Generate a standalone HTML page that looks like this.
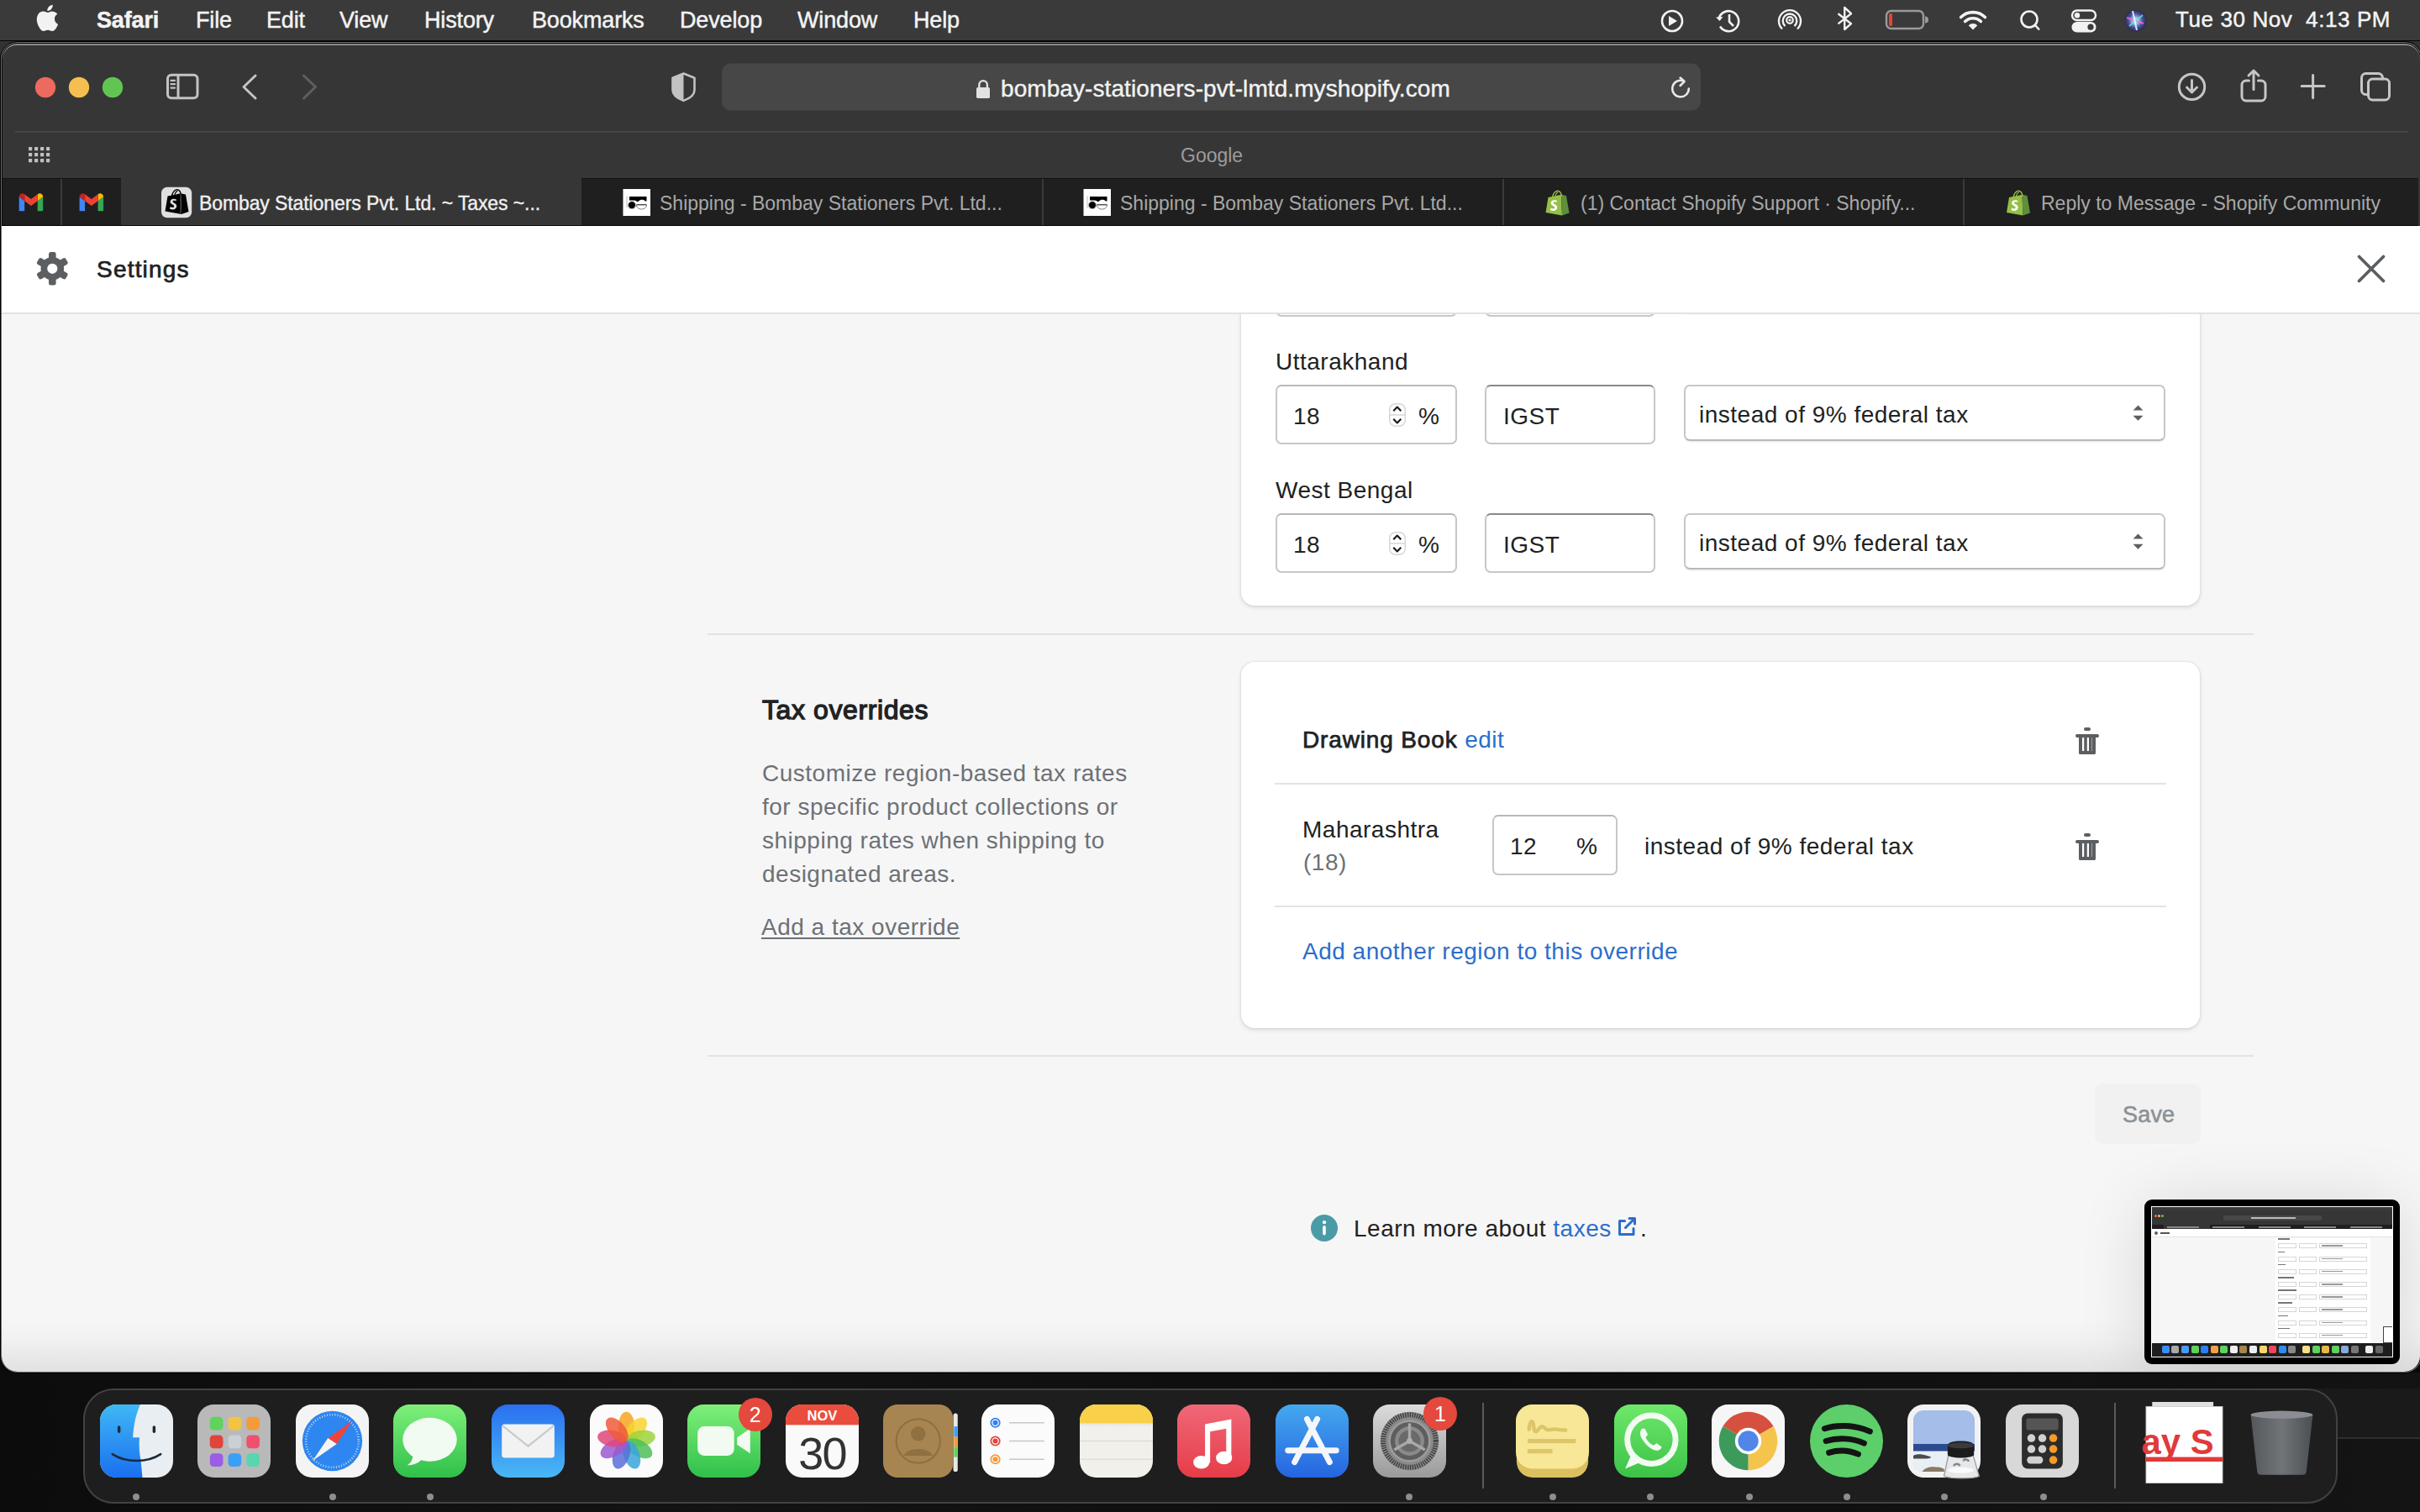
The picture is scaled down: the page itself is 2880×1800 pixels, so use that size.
<!DOCTYPE html><html><head><meta charset="utf-8"><style>
*{box-sizing:border-box;margin:0;padding:0}
html,body{width:2880px;height:1800px;overflow:hidden}
body{position:relative;background:#0b0b0b;font-family:"Liberation Sans",sans-serif;color:#202223}
.a{position:absolute}
.mi{position:absolute;top:6px;font-size:27px;line-height:36px;color:#f4f4f4;white-space:nowrap;-webkit-text-stroke:0.45px #f4f4f4;letter-spacing:-0.15px}
.tab{position:absolute;top:215px;height:55px;color:#a8a8a8;font-size:23px;line-height:55px;white-space:nowrap}
.t{position:absolute;white-space:nowrap;font-size:28px;letter-spacing:0.5px;line-height:36px;color:#202223}
.card{position:absolute;background:#fff;border-radius:16px;box-shadow:0 0 0 1px rgba(63,63,68,.06),0 2px 5px rgba(63,63,68,.16)}
.inp{position:absolute;background:#fff;border:2px solid #c4c7cb;border-top-color:#b5b9be;border-radius:7px}
.inp2{position:absolute;background:#fff;border:2px solid #c4c7cb;border-top-color:#858a8f;border-radius:7px}
.sel{position:absolute;background:#fff;border:2px solid #c4c7cb;border-bottom-color:#b5b9be;border-radius:7px;box-shadow:0 2px 1px rgba(0,0,0,.05)}
.hr{position:absolute;height:2px;background:#e1e3e5}
.ic{position:absolute;overflow:visible}
</style></head><body>
<div class="a" style="left:0;top:1634px;width:2880px;height:166px;background:linear-gradient(90deg,#0c0c0c,#131313 30%,#0d0d0d 60%,#141414)"></div>
<div class="a" style="left:0;top:0;width:2880px;height:49px;background:#3a3a3a;border-bottom:1px solid #050505"></div>
<div class="mi" style="left:115px;font-weight:700">Safari</div>
<div class="mi" style="left:233px;font-weight:400">File</div>
<div class="mi" style="left:317px;font-weight:400">Edit</div>
<div class="mi" style="left:404px;font-weight:400">View</div>
<div class="mi" style="left:505px;font-weight:400">History</div>
<div class="mi" style="left:633px;font-weight:400">Bookmarks</div>
<div class="mi" style="left:809px;font-weight:400">Develop</div>
<div class="mi" style="left:949px;font-weight:400">Window</div>
<div class="mi" style="left:1087px;font-weight:400">Help</div>
<div class="mi" style="left:2589px;top:5px;font-size:26px;letter-spacing:0.6px">Tue 30 Nov&nbsp; 4:13 PM</div>
<svg class="ic" style="left:0;top:0" width="2880" height="49" viewBox="0 0 2880 49">
<g fill="#f2f2f2">
 <!-- apple logo -->
 <path d="M62.5 14.5c1.6-2 2.7-4.6 2.4-7.3-2.3.1-5.1 1.6-6.7 3.5-1.5 1.7-2.8 4.4-2.4 7 2.6.2 5.2-1.3 6.7-3.2zM64.9 18.3c-3.7-.2-6.8 2.1-8.6 2.1-1.8 0-4.5-2-7.4-1.9-3.8.1-7.3 2.2-9.2 5.6-3.9 6.8-1 16.9 2.8 22.4 1.9 2.7 4.1 5.7 7 5.6 2.8-.1 3.9-1.8 7.3-1.8 3.4 0 4.4 1.8 7.4 1.8 3 -.1 4.9-2.8 6.8-5.5 2.1-3.1 3-6.1 3-6.3-.1 0-5.9-2.3-5.9-8.9-.1-5.6 4.5-8.2 4.7-8.4-2.6-3.8-6.6-4.2-8-4.3z" transform="translate(17.3 0.6) scale(0.70)"/>
</g>
<g fill="none" stroke="#f2f2f2" stroke-width="2.6">
 <circle cx="1990" cy="25" r="12"/>
 <path d="M2045.5 22.5a12 12 0 1 1 1.5 9" />
 <path d="M2058 17v9l5 5"/>
 <path d="M2121 34.5a13 13 0 1 1 18 0" stroke-width="2.4"/>
 <path d="M2124.5 31a8.3 8.3 0 1 1 11 0" stroke-width="2.4"/>
 <circle cx="2130" cy="24" r="3.8" stroke-width="2.2"/>
 <path d="M2187.5 16.2L2203 28.2 2195.2 35V9l7.8 7.2-15.5 12.2" stroke-width="2.4" stroke-linejoin="round"/>
 <rect x="2245" y="13" width="44" height="21" rx="5.5" stroke="#9a9a9a" stroke-width="2.4"/>
 <circle cx="2415" cy="23" r="9.5"/>
 <path d="M2422 30l5 5.5"/>
</g>
<path d="M2042 20.5l4.5 4.5 4-5z" fill="#f2f2f2"/>
<path d="M1986 19v12l10-6z" fill="#f2f2f2"/>
<circle cx="2130" cy="24" r="1.6" fill="#f2f2f2"/>
<path d="M2291 19.5a3.5 3.5 0 0 1 0 8z" fill="#9a9a9a"/>
<rect x="2248" y="16" width="4" height="15" rx="1.5" fill="#ea4335"/>
<g fill="none" stroke="#f2f2f2" stroke-width="3.6" stroke-linecap="round">
 <path d="M2333.6 20.6a20.4 20.4 0 0 1 28.8 0"/>
 <path d="M2338.6 25.6a13.3 13.3 0 0 1 18.8 0"/>
</g>
<path d="M2348 35.5l-5.3-5.3a7.5 7.5 0 0 1 10.6 0z" fill="#f2f2f2"/>
<g>
 <rect x="2466" y="12.5" width="28" height="11.5" rx="5.75" fill="none" stroke="#f2f2f2" stroke-width="2.4"/>
 <circle cx="2472" cy="18.3" r="3.2" fill="#f2f2f2"/>
 <rect x="2465.5" y="26" width="29" height="12.5" rx="6.25" fill="#f2f2f2"/>
 <circle cx="2488" cy="32.2" r="3.6" fill="#3a3a3a"/>
</g>
<defs>
 <radialGradient id="siri" cx="50%" cy="50%" r="50%">
  <stop offset="0" stop-color="#f0f8ff"/><stop offset="0.3" stop-color="#8fb8e8"/><stop offset="0.65" stop-color="#4a4f9a"/><stop offset="1" stop-color="#2c2a48"/>
 </radialGradient>
</defs>
<circle cx="2541.5" cy="24.5" r="13" fill="url(#siri)"/>
<path d="M2531 21l20 7" stroke="#ff6ad5" stroke-width="2.2" opacity="0.8"/><path d="M2550 18l-16 13" stroke="#5ef0c0" stroke-width="2" opacity="0.8"/><path d="M2538 13l5 23" stroke="#e8f8ff" stroke-width="2" opacity="0.9"/>
</svg>
<div class="a" style="left:0;top:49px;width:2880px;height:60px;background:#323232"></div>
<div class="a" style="left:0;top:49px;width:2883px;height:1586px;border-radius:21px;background:#000"></div>
<div class="a" style="left:1px;top:50px;width:2881px;height:1584px;border-radius:20px;background:#6e6e6e"></div>
<div class="a" style="left:2px;top:51px;width:2879px;height:1582px;border-radius:19px;background:#0a0a0a"></div>
<div class="a" style="left:3px;top:52px;width:2877px;height:1580px;border-radius:18px;background:#8a8a8a"></div>
<div class="a" style="left:3px;top:54px;width:2877px;height:1578px;border-radius:17px;background:#363636"></div>
<svg class="ic" style="left:0;top:49px" width="2880" height="165" viewBox="0 49 2880 165">
<circle cx="54" cy="104" r="12.2" fill="#ed6a5e"/>
<circle cx="94" cy="104" r="12.2" fill="#f5bf4f"/>
<circle cx="134" cy="104" r="12.2" fill="#61c554"/>
<g fill="none" stroke="#c4c4c4" stroke-width="3" stroke-linecap="round" stroke-linejoin="round">
 <rect x="199.5" y="89.2" width="35.5" height="27.5" rx="4.5"/>
 <path d="M212 89.5v27"/>
 <path d="M203.5 95.8h4.5M203.5 100.2h4.5M203.5 104.6h4.5" stroke-width="2.3"/>
 <path d="M304 90l-14 13.5 14 13.5"/>
 <path d="M361.5 90l14 13.5-14 13.5" stroke="#5f5f5f"/>
</g>
<path d="M813.5 87.5l-13 5.2v14.5c0 5 4.5 9.5 13 12.7 8.5-3.2 13-7.7 13-12.7v-14.5z" fill="none" stroke="#c2c2c2" stroke-width="2.6" stroke-linejoin="round"/>
<path d="M813.5 87.5l-13 5.2v14.5c0 5 4.5 9.5 13 12.7z" fill="#c2c2c2"/>
<rect x="859" y="75.5" width="1165" height="56" rx="11" fill="#474747"/>
<path d="M1165.3 104.5v-3.6a4.8 4.8 0 0 1 9.6 0v3.6" fill="none" stroke="#e2e2e2" stroke-width="2.4"/>
<rect x="1162" y="104" width="16" height="13" rx="1.8" fill="#e2e2e2"/>
<g fill="none" stroke="#e8e8e8" stroke-width="2.5" stroke-linecap="round" stroke-linejoin="round">
 <path d="M2009.8 105.5a9.8 9.8 0 1 1-6.5-9.2"/>
 <path d="M1999.6 92.5l5 4.5-5 5"/>
</g>
<rect x="18" y="156" width="2848" height="1.6" fill="#4a4a4a"/>
<g fill="#c0c0c0">
<rect x="34" y="175" width="4.2" height="4.2" rx="0.6"/><rect x="41" y="175" width="4.2" height="4.2" rx="0.6"/><rect x="48" y="175" width="4.2" height="4.2" rx="0.6"/><rect x="55" y="175" width="4.2" height="4.2" rx="0.6"/><rect x="34" y="182" width="4.2" height="4.2" rx="0.6"/><rect x="41" y="182" width="4.2" height="4.2" rx="0.6"/><rect x="48" y="182" width="4.2" height="4.2" rx="0.6"/><rect x="55" y="182" width="4.2" height="4.2" rx="0.6"/><rect x="34" y="189" width="4.2" height="4.2" rx="0.6"/><rect x="41" y="189" width="4.2" height="4.2" rx="0.6"/><rect x="48" y="189" width="4.2" height="4.2" rx="0.6"/><rect x="55" y="189" width="4.2" height="4.2" rx="0.6"/>
</g>
<g fill="none" stroke="#c6c6c6" stroke-width="3" stroke-linecap="round" stroke-linejoin="round">
 <circle cx="2608.5" cy="103.4" r="15.2"/>
 <path d="M2608.5 95.5v14M2602.5 104l6 6 6-6"/>
 <path d="M2676.5 96h-3.5a5 5 0 0 0-5 5v14a5 5 0 0 0 5 5h18a5 5 0 0 0 5-5v-14a5 5 0 0 0-5-5h-3.5"/>
 <path d="M2682 106.5v-22M2676 90l6-6 6 6"/>
 <path d="M2752.6 89.5v27M2739.2 102.6h27"/>
 <path d="M2818 112.5h-2.5a5 5 0 0 1-5-5v-15a5 5 0 0 1 5-5h15a5 5 0 0 1 5 5v1.5"/>
 <rect x="2818.5" y="94" width="25" height="25" rx="5"/>
</g>
</svg>
<div class="a" style="left:1191px;top:88px;font-size:28px;line-height:36px;color:#f2f2f2;white-space:nowrap;letter-spacing:0.08px;-webkit-text-stroke:0.4px #f2f2f2">bombay-stationers-pvt-lmtd.myshopify.com</div>
<div class="a" style="left:1405px;top:170px;font-size:23px;line-height:30px;color:#9c9c9c;white-space:nowrap">Google</div>
<div class="a" style="left:3px;top:212px;width:2875px;height:57px;background:#1f1f1f;border-top:1px solid #121212;border-bottom:1px solid #050505"></div>
<div class="a" style="left:144px;top:212px;width:548px;height:56px;background:#363636"></div>
<div class="a" style="left:72px;top:213px;width:2px;height:55px;background:#3a3a3a"></div>
<div class="a" style="left:1240px;top:213px;width:2px;height:55px;background:#3a3a3a"></div>
<div class="a" style="left:1788px;top:213px;width:2px;height:55px;background:#3a3a3a"></div>
<div class="a" style="left:2336px;top:213px;width:2px;height:55px;background:#3a3a3a"></div>
<div class="tab" style="left:237px;color:#f0f0f0;-webkit-text-stroke:0.35px #f0f0f0;letter-spacing:-0.1px">Bombay Stationers Pvt. Ltd. ~ Taxes ~...</div>
<div class="tab" style="left:785px">Shipping - Bombay Stationers Pvt. Ltd...</div>
<div class="tab" style="left:1333px">Shipping - Bombay Stationers Pvt. Ltd...</div>
<div class="tab" style="left:1881px">(1) Contact Shopify Support · Shopify...</div>
<div class="tab" style="left:2429px">Reply to Message - Shopify Community</div>
<svg class="ic" style="left:0;top:212px" width="2880" height="57" viewBox="0 212 2880 57">
<g transform="translate(22.7 229.8)">
 <path d="M0 4.5v17h6.5V9.5z" fill="#4285f4"/>
 <path d="M22 9.5v12h6.5v-17z" fill="#34a853"/>
 <path d="M22 1.5v8l6.5-5c0-3.5-4-5.5-6.5-3z" fill="#fbbc04"/>
 <path d="M6.5 9.5v-8l7.75 5.8 7.75-5.8v8l-7.75 5.8z" fill="#ea4335"/>
 <path d="M0 4.5v0c0-3.5 4-5.5 6.5-3v8z" fill="#c5221f"/>
</g>
<g transform="translate(94.6 229.8)">
 <path d="M0 4.5v17h6.5V9.5z" fill="#4285f4"/>
 <path d="M22 9.5v12h6.5v-17z" fill="#34a853"/>
 <path d="M22 1.5v8l6.5-5c0-3.5-4-5.5-6.5-3z" fill="#fbbc04"/>
 <path d="M6.5 9.5v-8l7.75 5.8 7.75-5.8v8l-7.75 5.8z" fill="#ea4335"/>
 <path d="M0 4.5v0c0-3.5 4-5.5 6.5-3v8z" fill="#c5221f"/>
</g>
<rect x="192" y="222.7" width="36.2" height="36.5" rx="7" fill="#e0e0e0"/>
<g transform="translate(195.5 224) scale(1.0)">
 <path d="M4 9.5l15.5-3.3 1 24.8L1 27.5z" fill="#000"/>
 <path d="M19.5 6.2l6 1.3 3.5 20.5-8.5 3z" fill="#000"/>
 <path d="M9 9.8c0.5-4.5 3.2-8 6-8s4.5 2.5 5 6.5" fill="none" stroke="#000" stroke-width="1.4"/>
 <path d="M12.2 9c0.6-3 2-5.3 3.7-5.3" fill="none" stroke="#000" stroke-width="1.2"/>
 <path d="M14.5 13.5c-1-.6-2-.8-3.2-.8-2.6 0-4.2 1.6-4.2 3.5 0 3 4.6 3.3 4.6 5.2 0 .8-.6 1.5-1.7 1.5-1.4 0-2.8-.9-2.8-.9l-.7 2.6s1.3 1 3.4 1c2.8 0 4.8-2 4.8-4.3 0-3.3-4.7-3.7-4.7-5.3 0-.5.4-1.2 1.6-1.2 1.3 0 2.3.7 2.3.7z" fill="#e0e0e0"/>
 <path d="M19.5 6.5v24.3" stroke="#9a9a9a" stroke-width="0.5"/>
</g>
<g transform="translate(741.5 225)">
 <rect x="0" y="0" width="32.5" height="32" fill="#fff"/>
 <path d="M7.5 9h20.5v5.5h-1.5c-1.5-1.5-4-2.2-6.2-1.2-1.5.7-2.5 1.7-3 2.3-1-1.3-2.5-2-4.5-2h-5.3z" fill="#000"/>
 <path d="M4.5 8.5v14" stroke="#c8c8c8" stroke-width="1.2"/>
 <circle cx="10.5" cy="19.2" r="4.5" fill="#000" stroke="#bdbdbd" stroke-width="1"/>
 <path d="M16 19h12c0 3-2.6 5-6 5s-6-2-6-5z" fill="#fff" stroke="#777" stroke-width="1"/>
 <path d="M16 18.5h12" stroke="#555" stroke-width="1.2"/>
</g>
<g transform="translate(1289.5 225)">
 <rect x="0" y="0" width="32.5" height="32" fill="#fff"/>
 <path d="M7.5 9h20.5v5.5h-1.5c-1.5-1.5-4-2.2-6.2-1.2-1.5.7-2.5 1.7-3 2.3-1-1.3-2.5-2-4.5-2h-5.3z" fill="#000"/>
 <path d="M4.5 8.5v14" stroke="#c8c8c8" stroke-width="1.2"/>
 <circle cx="10.5" cy="19.2" r="4.5" fill="#000" stroke="#bdbdbd" stroke-width="1"/>
 <path d="M16 19h12c0 3-2.6 5-6 5s-6-2-6-5z" fill="#fff" stroke="#777" stroke-width="1"/>
 <path d="M16 18.5h12" stroke="#555" stroke-width="1.2"/>
</g>
<g transform="translate(1838.5 225.5) scale(1.0)">
 <path d="M4 9.5l15.5-3.3 1 24.8L1 27.5z" fill="#95bf47"/>
 <path d="M19.5 6.2l6 1.3 3.5 20.5-8.5 3z" fill="#5e8e3e"/>
 <path d="M9 9.8c0.5-4.5 3.2-8 6-8s4.5 2.5 5 6.5" fill="none" stroke="#95bf47" stroke-width="1.4"/>
 <path d="M12.2 9c0.6-3 2-5.3 3.7-5.3" fill="none" stroke="#95bf47" stroke-width="1.2"/>
 <path d="M14.5 13.5c-1-.6-2-.8-3.2-.8-2.6 0-4.2 1.6-4.2 3.5 0 3 4.6 3.3 4.6 5.2 0 .8-.6 1.5-1.7 1.5-1.4 0-2.8-.9-2.8-.9l-.7 2.6s1.3 1 3.4 1c2.8 0 4.8-2 4.8-4.3 0-3.3-4.7-3.7-4.7-5.3 0-.5.4-1.2 1.6-1.2 1.3 0 2.3.7 2.3.7z" fill="#ffffff"/>
 
</g>
<g transform="translate(2387 225.5) scale(1.0)">
 <path d="M4 9.5l15.5-3.3 1 24.8L1 27.5z" fill="#95bf47"/>
 <path d="M19.5 6.2l6 1.3 3.5 20.5-8.5 3z" fill="#5e8e3e"/>
 <path d="M9 9.8c0.5-4.5 3.2-8 6-8s4.5 2.5 5 6.5" fill="none" stroke="#95bf47" stroke-width="1.4"/>
 <path d="M12.2 9c0.6-3 2-5.3 3.7-5.3" fill="none" stroke="#95bf47" stroke-width="1.2"/>
 <path d="M14.5 13.5c-1-.6-2-.8-3.2-.8-2.6 0-4.2 1.6-4.2 3.5 0 3 4.6 3.3 4.6 5.2 0 .8-.6 1.5-1.7 1.5-1.4 0-2.8-.9-2.8-.9l-.7 2.6s1.3 1 3.4 1c2.8 0 4.8-2 4.8-4.3 0-3.3-4.7-3.7-4.7-5.3 0-.5.4-1.2 1.6-1.2 1.3 0 2.3.7 2.3.7z" fill="#ffffff"/>
 
</g>
</svg>
<div class="a" style="left:2px;top:269px;width:2878px;height:1364px;background:#f6f6f7;border-bottom-left-radius:19px;border-bottom-right-radius:19px;overflow:hidden"></div>
<div class="a" style="left:2px;top:1568px;width:2878px;height:66px;background:linear-gradient(rgba(0,0,0,0),rgba(0,0,0,.025) 45%,rgba(0,0,0,.085));border-bottom-left-radius:19px;border-bottom-right-radius:19px"></div>
<div class="card" style="left:1477px;top:300px;width:1141px;height:421px"></div>
<div class="inp" style="left:1518px;top:306px;width:216px;height:71px"></div>
<div class="inp2" style="left:1767px;top:306px;width:203px;height:71px"></div>
<div class="sel" style="left:2004px;top:306px;width:573px;height:67px"></div>
<div class="t" style="left:1518px;top:413px">Uttarakhand</div>
<div class="inp" style="left:1518px;top:458px;width:216px;height:71px"></div>
<div class="t" style="left:1539px;top:478px">18</div>
<svg class="ic" style="left:1653px;top:480px" width="20" height="28" viewBox="0 0 20 28">
<rect x="0.75" y="0.75" width="18.5" height="26.5" rx="7" fill="#fff" stroke="#d6d6d6" stroke-width="1.5"/>
<path d="M1 14h18" stroke="#d6d6d6" stroke-width="1.5"/>
<path d="M5.3 9.2l4.5-4.6 4.5 4.6M5.3 18.8l4.5 4.6 4.5-4.6" fill="none" stroke="#1a1a1a" stroke-width="2.2" stroke-linejoin="round"/>
</svg>
<div class="t" style="left:1688px;top:478px">%</div>
<div class="inp2" style="left:1767px;top:458px;width:203px;height:71px"></div>
<div class="t" style="left:1789px;top:478px">IGST</div>
<div class="sel" style="left:2004px;top:458px;width:573px;height:67px"></div>
<div class="t" style="left:2022px;top:476px">instead of 9% federal tax</div>
<svg class="ic" style="left:2537.5px;top:482px" width="14" height="20" viewBox="0 0 14 20">
<path d="M0.5 6.5L6.5 0.5 12.5 6.5z M0.5 12.8h12L6.5 18.8z" fill="#5c5f62"/>
</svg>
<div class="t" style="left:1518px;top:566px">West Bengal</div>
<div class="inp" style="left:1518px;top:611px;width:216px;height:71px"></div>
<div class="t" style="left:1539px;top:631px">18</div>
<svg class="ic" style="left:1653px;top:633px" width="20" height="28" viewBox="0 0 20 28">
<rect x="0.75" y="0.75" width="18.5" height="26.5" rx="7" fill="#fff" stroke="#d6d6d6" stroke-width="1.5"/>
<path d="M1 14h18" stroke="#d6d6d6" stroke-width="1.5"/>
<path d="M5.3 9.2l4.5-4.6 4.5 4.6M5.3 18.8l4.5 4.6 4.5-4.6" fill="none" stroke="#1a1a1a" stroke-width="2.2" stroke-linejoin="round"/>
</svg>
<div class="t" style="left:1688px;top:631px">%</div>
<div class="inp2" style="left:1767px;top:611px;width:203px;height:71px"></div>
<div class="t" style="left:1789px;top:631px">IGST</div>
<div class="sel" style="left:2004px;top:611px;width:573px;height:67px"></div>
<div class="t" style="left:2022px;top:629px">instead of 9% federal tax</div>
<svg class="ic" style="left:2537.5px;top:635px" width="14" height="20" viewBox="0 0 14 20">
<path d="M0.5 6.5L6.5 0.5 12.5 6.5z M0.5 12.8h12L6.5 18.8z" fill="#5c5f62"/>
</svg>
<div class="hr" style="left:842px;top:754px;width:1840px"></div>
<div class="t" style="left:907px;top:825px;font-size:32px;font-weight:400;letter-spacing:0.6px;line-height:40px;-webkit-text-stroke:1.3px #202223">Tax overrides</div>
<div class="t" style="left:907px;top:903px;color:#6d7175">Customize region-based tax rates</div>
<div class="t" style="left:907px;top:943px;color:#6d7175">for specific product collections or</div>
<div class="t" style="left:907px;top:983px;color:#6d7175">shipping rates when shipping to</div>
<div class="t" style="left:907px;top:1023px;color:#6d7175">designated areas.</div>
<div class="t" style="left:906px;top:1086px;color:#6d7175;text-decoration:underline;text-underline-offset:3px;text-decoration-thickness:2px">Add a tax override</div>
<div class="card" style="left:1477px;top:788px;width:1141px;height:436px"></div>
<div class="t" style="left:1550px;top:863px;font-weight:400;letter-spacing:0.85px;-webkit-text-stroke:0.75px #202223">Drawing Book <span style="-webkit-text-stroke:0"><span style="font-weight:400;color:#2c6ecb;letter-spacing:0.5px">edit</span></span></div>
<svg class="ic" style="left:2470px;top:866px" width="28" height="32" viewBox="0 0 28 32">
<g fill="#5c5f62">
<rect x="10" y="0" width="8" height="4" rx="2"/>
<rect x="0" y="8" width="28" height="4" rx="2"/>
<path d="M4 10h4v18h2.2V10h3.6v18h2.2V10h3.6v18H20V10h4v20.5a1.5 1.5 0 0 1-1.5 1.5h-17A1.5 1.5 0 0 1 4 30.5z"/>
</g></svg>
<div class="hr" style="left:1517px;top:932px;width:1061px"></div>
<div class="t" style="left:1550px;top:970px">Maharashtra</div>
<div class="t" style="left:1551px;top:1009px;color:#6d7175">(18)</div>
<div class="inp" style="left:1776px;top:970px;width:149px;height:72px"></div>
<div class="t" style="left:1797px;top:990px">12</div>
<div class="t" style="left:1876px;top:990px">%</div>
<div class="t" style="left:1957px;top:990px">instead of 9% federal tax</div>
<svg class="ic" style="left:2470px;top:992px" width="28" height="32" viewBox="0 0 28 32">
<g fill="#5c5f62">
<rect x="10" y="0" width="8" height="4" rx="2"/>
<rect x="0" y="8" width="28" height="4" rx="2"/>
<path d="M4 10h4v18h2.2V10h3.6v18h2.2V10h3.6v18H20V10h4v20.5a1.5 1.5 0 0 1-1.5 1.5h-17A1.5 1.5 0 0 1 4 30.5z"/>
</g></svg>
<div class="hr" style="left:1517px;top:1078px;width:1061px"></div>
<div class="t" style="left:1550px;top:1115px;color:#2c6ecb">Add another region to this override</div>
<div class="hr" style="left:842px;top:1256px;width:1840px"></div>
<div class="a" style="left:2494px;top:1291px;width:124px;height:70px;border-radius:8px;background:#f1f1f1;box-shadow:0 0 1px 1px rgba(0,0,0,.025)"></div>
<div class="t" style="left:2526px;top:1309px;color:#8c9196;font-size:27px;letter-spacing:0.2px;-webkit-text-stroke:0.6px #8c9196">Save</div>
<svg class="ic" style="left:1560px;top:1446px" width="32" height="32" viewBox="0 0 32 32">
<circle cx="16" cy="16" r="16" fill="#4b9ba7"/>
<circle cx="16" cy="9.2" r="2.1" fill="#fff"/>
<rect x="14.2" y="13" width="3.6" height="11.5" rx="1.8" fill="#fff"/>
</svg>
<div class="t" style="left:1611px;top:1445px">Learn more about <span style="color:#2c6ecb">taxes</span></div>
<svg class="ic" style="left:1922px;top:1446px" width="28" height="28" viewBox="0 0 28 28">
<g fill="none" stroke="#2c6ecb" stroke-width="3" stroke-linecap="round" stroke-linejoin="round">
<path d="M11.5 7.5H5.5v16h16.5v-7"/>
<path d="M12.5 15.5L23.5 4.5M17 4.5h6.5v6.5"/>
</g></svg>
<div class="t" style="left:1952px;top:1445px">.</div>
<div class="a" style="left:2px;top:269px;width:2878px;height:105px;background:#fff;border-bottom:2px solid #e1e3e5"></div>
<svg class="ic" style="left:42px;top:300px" width="40" height="40" viewBox="0 0 40 40">
<g fill="#5c5f62" transform="translate(20.3 19.8)">
<circle r="13.8"/>
<rect x="-4.3" y="-19.7" width="8.6" height="39.4" rx="2.5"/>
<rect x="-4.3" y="-19.7" width="8.6" height="39.4" rx="2.5" transform="rotate(60)"/>
<rect x="-4.3" y="-19.7" width="8.6" height="39.4" rx="2.5" transform="rotate(120)"/>
</g>
<circle cx="20.3" cy="19.8" r="6.1" fill="#fff"/>
</svg>
<div class="t" style="left:115px;top:303px;font-weight:400;letter-spacing:1.2px;-webkit-text-stroke:0.75px #202223">Settings</div>
<svg class="ic" style="left:2800px;top:298px" width="44" height="44" viewBox="0 0 44 44">
<path d="M7.5 7.5l29 29M36.5 7.5l-29 29" stroke="#5c5f62" stroke-width="3.8" stroke-linecap="round"/>
</svg>
<div class="a" style="left:2552px;top:1428px;width:304px;height:196px;border-radius:9px;background:#000;box-shadow:0 6px 80px rgba(0,0,0,.13)"></div>
<div class="a" style="left:2560px;top:1436px;width:288px;height:180px;background:#fff"></div>
<div class="a" style="left:2561px;top:1437px;width:286px;height:178px;background:#f6f6f7;overflow:hidden"><div class="a" style="left:0;top:0;width:286px;height:4px;background:#3a3a3a"></div><div class="a" style="left:0;top:4px;width:286px;height:17px;background:#363636"></div><div class="a" style="left:85px;top:10px;width:117px;height:6px;border-radius:1px;background:#474747"></div><div class="a" style="left:118px;top:12px;width:53px;height:2px;background:#bbb"></div><div class="a" style="left:3px;top:9px;width:3px;height:3px;border-radius:50%;background:#ed6a5e"></div><div class="a" style="left:7px;top:9px;width:3px;height:3px;border-radius:50%;background:#f5bf4f"></div><div class="a" style="left:11px;top:9px;width:3px;height:3px;border-radius:50%;background:#61c554"></div><div class="a" style="left:0;top:21px;width:286px;height:5px;background:#1f1f1f"></div><div class="a" style="left:14px;top:21px;width:55px;height:5px;background:#363636"></div><div class="a" style="left:18px;top:23px;width:38px;height:1.5px;background:#888"></div><div class="a" style="left:72px;top:23px;width:38px;height:1.5px;background:#888"></div><div class="a" style="left:127px;top:23px;width:38px;height:1.5px;background:#888"></div><div class="a" style="left:181px;top:23px;width:38px;height:1.5px;background:#888"></div><div class="a" style="left:236px;top:23px;width:38px;height:1.5px;background:#888"></div><div class="a" style="left:0;top:26px;width:286px;height:10px;background:#fff;border-bottom:1px solid #e3e3e3"></div><div class="a" style="left:3px;top:29px;width:4px;height:4px;border-radius:50%;background:#5c5f62"></div><div class="a" style="left:10px;top:30px;width:11px;height:2px;background:#555"></div><div class="a" style="left:147px;top:37px;width:113px;height:126px;background:#fff"></div><div class="a" style="left:150px;top:37.4px;width:14px;height:1.6px;background:#777"></div><div class="a" style="left:150px;top:43.4px;width:22px;height:6px;border:1px solid #d6d6d6;background:#fff"></div><div class="a" style="left:175px;top:43.4px;width:21px;height:6px;border:1px solid #d6d6d6;background:#fff"></div><div class="a" style="left:199px;top:43.4px;width:57px;height:6px;border:1px solid #d6d6d6;background:#fff"></div><div class="a" style="left:202px;top:45.4px;width:25px;height:1.5px;background:#999"></div><div class="a" style="left:150px;top:52.6px;width:8px;height:1.6px;background:#777"></div><div class="a" style="left:150px;top:58.6px;width:22px;height:6px;border:1px solid #d6d6d6;background:#fff"></div><div class="a" style="left:175px;top:58.6px;width:21px;height:6px;border:1px solid #d6d6d6;background:#fff"></div><div class="a" style="left:199px;top:58.6px;width:57px;height:6px;border:1px solid #d6d6d6;background:#fff"></div><div class="a" style="left:202px;top:60.6px;width:25px;height:1.5px;background:#999"></div><div class="a" style="left:150px;top:67.8px;width:9px;height:1.6px;background:#777"></div><div class="a" style="left:150px;top:73.8px;width:22px;height:6px;border:1px solid #d6d6d6;background:#fff"></div><div class="a" style="left:175px;top:73.8px;width:21px;height:6px;border:1px solid #d6d6d6;background:#fff"></div><div class="a" style="left:199px;top:73.8px;width:57px;height:6px;border:1px solid #d6d6d6;background:#fff"></div><div class="a" style="left:202px;top:75.8px;width:25px;height:1.5px;background:#999"></div><div class="a" style="left:150px;top:83.0px;width:19px;height:1.6px;background:#777"></div><div class="a" style="left:150px;top:89.0px;width:22px;height:6px;border:1px solid #d6d6d6;background:#fff"></div><div class="a" style="left:175px;top:89.0px;width:21px;height:6px;border:1px solid #d6d6d6;background:#fff"></div><div class="a" style="left:199px;top:89.0px;width:57px;height:6px;border:1px solid #d6d6d6;background:#fff"></div><div class="a" style="left:202px;top:91.0px;width:25px;height:1.5px;background:#999"></div><div class="a" style="left:150px;top:98.2px;width:22px;height:1.6px;background:#777"></div><div class="a" style="left:150px;top:104.2px;width:22px;height:6px;border:1px solid #d6d6d6;background:#fff"></div><div class="a" style="left:175px;top:104.2px;width:21px;height:6px;border:1px solid #d6d6d6;background:#fff"></div><div class="a" style="left:199px;top:104.2px;width:57px;height:6px;border:1px solid #d6d6d6;background:#fff"></div><div class="a" style="left:202px;top:106.2px;width:25px;height:1.5px;background:#999"></div><div class="a" style="left:150px;top:113.4px;width:17px;height:1.6px;background:#777"></div><div class="a" style="left:150px;top:119.4px;width:22px;height:6px;border:1px solid #d6d6d6;background:#fff"></div><div class="a" style="left:175px;top:119.4px;width:21px;height:6px;border:1px solid #d6d6d6;background:#fff"></div><div class="a" style="left:199px;top:119.4px;width:57px;height:6px;border:1px solid #d6d6d6;background:#fff"></div><div class="a" style="left:202px;top:121.4px;width:25px;height:1.5px;background:#999"></div><div class="a" style="left:150px;top:128.6px;width:12px;height:1.6px;background:#777"></div><div class="a" style="left:150px;top:134.6px;width:22px;height:6px;border:1px solid #d6d6d6;background:#fff"></div><div class="a" style="left:175px;top:134.6px;width:21px;height:6px;border:1px solid #d6d6d6;background:#fff"></div><div class="a" style="left:199px;top:134.6px;width:57px;height:6px;border:1px solid #d6d6d6;background:#fff"></div><div class="a" style="left:202px;top:136.6px;width:25px;height:1.5px;background:#999"></div><div class="a" style="left:150px;top:143.8px;width:14px;height:1.6px;background:#777"></div><div class="a" style="left:150px;top:149.8px;width:22px;height:6px;border:1px solid #d6d6d6;background:#fff"></div><div class="a" style="left:175px;top:149.8px;width:21px;height:6px;border:1px solid #d6d6d6;background:#fff"></div><div class="a" style="left:199px;top:149.8px;width:57px;height:6px;border:1px solid #d6d6d6;background:#fff"></div><div class="a" style="left:202px;top:151.8px;width:25px;height:1.5px;background:#999"></div><div class="a" style="left:275px;top:142px;width:11px;height:20px;background:#fff;border:1px solid #444;border-right:none"></div><div class="a" style="left:0;top:162px;width:286px;height:16px;background:#1e1e1e"></div><div class="a" style="left:11.8px;top:165px;width:9px;height:9px;border-radius:2px;background:#3d8bf5"></div><div class="a" style="left:23.4px;top:165px;width:9px;height:9px;border-radius:2px;background:#aaa"></div><div class="a" style="left:35.0px;top:165px;width:9px;height:9px;border-radius:2px;background:#4a9af5"></div><div class="a" style="left:46.5px;top:165px;width:9px;height:9px;border-radius:2px;background:#5ed25e"></div><div class="a" style="left:58.1px;top:165px;width:9px;height:9px;border-radius:2px;background:#2f7ff0"></div><div class="a" style="left:69.7px;top:165px;width:9px;height:9px;border-radius:2px;background:#f0a04a"></div><div class="a" style="left:81.3px;top:165px;width:9px;height:9px;border-radius:2px;background:#5ed25e"></div><div class="a" style="left:92.9px;top:165px;width:9px;height:9px;border-radius:2px;background:#eee"></div><div class="a" style="left:104.4px;top:165px;width:9px;height:9px;border-radius:2px;background:#a6854e"></div><div class="a" style="left:116.0px;top:165px;width:9px;height:9px;border-radius:2px;background:#eee"></div><div class="a" style="left:127.6px;top:165px;width:9px;height:9px;border-radius:2px;background:#f5d76e"></div><div class="a" style="left:139.2px;top:165px;width:9px;height:9px;border-radius:2px;background:#f0455a"></div><div class="a" style="left:150.8px;top:165px;width:9px;height:9px;border-radius:2px;background:#2f8cf0"></div><div class="a" style="left:162.3px;top:165px;width:9px;height:9px;border-radius:2px;background:#888"></div><div class="a" style="left:179.0px;top:165px;width:9px;height:9px;border-radius:2px;background:#f5e08a"></div><div class="a" style="left:190.6px;top:165px;width:9px;height:9px;border-radius:2px;background:#5ed25e"></div><div class="a" style="left:202.2px;top:165px;width:9px;height:9px;border-radius:2px;background:#e8b84a"></div><div class="a" style="left:213.7px;top:165px;width:9px;height:9px;border-radius:2px;background:#5ed25e"></div><div class="a" style="left:225.3px;top:165px;width:9px;height:9px;border-radius:2px;background:#8aa8d8"></div><div class="a" style="left:236.9px;top:165px;width:9px;height:9px;border-radius:2px;background:#777"></div><div class="a" style="left:253.6px;top:165px;width:9px;height:9px;border-radius:2px;background:#eee"></div><div class="a" style="left:265.8px;top:165px;width:9px;height:9px;border-radius:2px;background:#666"></div></div>
<div class="a" style="left:2700px;top:1653px;width:180px;height:60px;background:#1a1a1a;border-bottom:2px solid #2e2e2e"></div>
<div class="a" style="left:99px;top:1653px;width:2683px;height:137px;border-radius:36px;background:#1e1e1e;border:2px solid #424242"></div>
<svg class="ic" style="left:118.6px;top:1672px" width="87" height="87" viewBox="0 0 100 100"><defs><linearGradient id="fb" x1="0" y1="0" x2="0" y2="1"><stop offset="0" stop-color="#3fb8f5"/><stop offset="1" stop-color="#1a6ff0"/></linearGradient>
<clipPath id="fc"><rect width="100" height="100" rx="22.5"/></clipPath></defs>
<g clip-path="url(#fc)"><rect width="100" height="100" fill="#e9eef3"/>
<path d="M0 0h55c-6 14-9 28-10 45h9c-1 12 0 22 2 33l2 22H0z" fill="url(#fb)"/></g>
<rect x="24" y="29" width="4" height="10" rx="2" fill="#1c2a3a"/><rect x="72" y="29" width="4" height="10" rx="2" fill="#1c2a3a"/>
<path d="M17 68c18 12 48 12 66 0" fill="none" stroke="#1c2a3a" stroke-width="3" stroke-linecap="round"/></svg>
<svg class="ic" style="left:235.2px;top:1672px" width="87" height="87" viewBox="0 0 100 100"><rect width="100" height="100" rx="22.5" fill="#b9b9b9"/><rect x="17" y="17" width="18" height="18" rx="5" fill="#5fd35b"/><rect x="42" y="17" width="18" height="18" rx="5" fill="#f5c343"/><rect x="67" y="17" width="18" height="18" rx="5" fill="#f59a3a"/><rect x="17" y="42" width="18" height="18" rx="5" fill="#e0443a"/><rect x="42" y="42" width="18" height="18" rx="5" fill="#c9d0d6"/><rect x="67" y="42" width="18" height="18" rx="5" fill="#f0506e"/><rect x="17" y="67" width="18" height="18" rx="5" fill="#9b5de5"/><rect x="42" y="67" width="18" height="18" rx="5" fill="#3aa0f5"/><rect x="67" y="67" width="18" height="18" rx="5" fill="#58d6b0"/></svg>
<svg class="ic" style="left:351.79999999999995px;top:1672px" width="87" height="87" viewBox="0 0 100 100"><rect width="100" height="100" rx="22.5" fill="#f4f4f4"/>
<circle cx="50" cy="50" r="41" fill="#2e86f0"/><circle cx="50" cy="50" r="36" fill="none" stroke="#cfe3ff" stroke-width="3" stroke-dasharray="1 2.6"/>
<path d="M77 23L44 46l12 8z" fill="#f0443a"/><path d="M23 77l21-31 12 8z" fill="#f4f4f4"/></svg>
<svg class="ic" style="left:468.4px;top:1672px" width="87" height="87" viewBox="0 0 100 100"><defs><linearGradient id="mg" x1="0" y1="0" x2="0" y2="1"><stop offset="0" stop-color="#7ff07a"/><stop offset="1" stop-color="#2fc04a"/></linearGradient></defs>
<rect width="100" height="100" rx="22.5" fill="url(#mg)"/>
<ellipse cx="50" cy="48" rx="37" ry="30" fill="#f2fbf2"/><path d="M27 68c0 8-4 13-8 15 10 0 17-4 21-9z" fill="#f2fbf2"/></svg>
<svg class="ic" style="left:585.0px;top:1672px" width="87" height="87" viewBox="0 0 100 100"><defs><linearGradient id="mlg" x1="0" y1="0" x2="0" y2="1"><stop offset="0" stop-color="#2a6ff0"/><stop offset="1" stop-color="#49b8f5"/></linearGradient></defs>
<rect width="100" height="100" rx="22.5" fill="url(#mlg)"/>
<rect x="14" y="27" width="72" height="46" rx="4" fill="#f2f2f2"/><path d="M15 29l35 28 35-28" fill="none" stroke="#c8c8c8" stroke-width="2.5"/></svg>
<svg class="ic" style="left:701.6px;top:1672px" width="87" height="87" viewBox="0 0 100 100"><rect width="100" height="100" rx="22.5" fill="#fbfbfb"/><ellipse cx="50" cy="30" rx="11" ry="20" fill="#f5a623" opacity="0.85" transform="rotate(0 50 50)"/><ellipse cx="50" cy="30" rx="11" ry="20" fill="#f8d32f" opacity="0.85" transform="rotate(40 50 50)"/><ellipse cx="50" cy="30" rx="11" ry="20" fill="#9ed43a" opacity="0.85" transform="rotate(80 50 50)"/><ellipse cx="50" cy="30" rx="11" ry="20" fill="#4fbf5a" opacity="0.85" transform="rotate(120 50 50)"/><ellipse cx="50" cy="30" rx="11" ry="20" fill="#3aa6d8" opacity="0.85" transform="rotate(160 50 50)"/><ellipse cx="50" cy="30" rx="11" ry="20" fill="#5b6fd8" opacity="0.85" transform="rotate(200 50 50)"/><ellipse cx="50" cy="30" rx="11" ry="20" fill="#9b59d0" opacity="0.85" transform="rotate(240 50 50)"/><ellipse cx="50" cy="30" rx="11" ry="20" fill="#e0457b" opacity="0.85" transform="rotate(280 50 50)"/><ellipse cx="50" cy="30" rx="11" ry="20" fill="#f05a3a" opacity="0.85" transform="rotate(320 50 50)"/></svg>
<svg class="ic" style="left:818.1999999999999px;top:1672px" width="87" height="87" viewBox="0 0 100 100"><defs><linearGradient id="ftg" x1="0" y1="0" x2="0" y2="1"><stop offset="0" stop-color="#7ff07a"/><stop offset="1" stop-color="#2fc04a"/></linearGradient></defs>
<rect width="100" height="100" rx="22.5" fill="url(#ftg)"/>
<rect x="14" y="30" width="50" height="40" rx="9" fill="#f2fbf2"/><path d="M68 45l18-12v34L68 55z" fill="#f2fbf2"/></svg>
<svg class="ic" style="left:934.8px;top:1672px" width="87" height="87" viewBox="0 0 100 100"><clipPath id="cc"><rect width="100" height="100" rx="22.5"/></clipPath>
<g clip-path="url(#cc)"><rect width="100" height="100" fill="#fafafa"/><rect width="100" height="28" fill="#ea4d3d"/></g>
<text x="50" y="22" font-family="Liberation Sans" font-weight="700" font-size="19" fill="#fff" text-anchor="middle">NOV</text>
<text x="50" y="89" font-family="Liberation Sans" font-size="62" fill="#333" text-anchor="middle" letter-spacing="-2">30</text></svg>
<svg class="ic" style="left:1051.3999999999999px;top:1672px" width="87" height="87" viewBox="0 0 100 100"><rect x="96" y="12" width="6" height="80" rx="3" fill="#e8e8e8"/><rect x="97" y="44" width="5" height="14" fill="#f59a3a"/><rect x="97" y="58" width="5" height="14" fill="#5fd35b"/><rect x="97" y="30" width="5" height="14" fill="#3aa0f5"/>
<rect width="96" height="100" rx="20" fill="#a88550"/>
<circle cx="48" cy="50" r="30" fill="none" stroke="#8f7040" stroke-width="2.5"/><circle cx="48" cy="40" r="10" fill="#8f7040"/><path d="M28 70c6-12 34-12 40 0" fill="#8f7040"/></svg>
<svg class="ic" style="left:1167.9999999999998px;top:1672px" width="87" height="87" viewBox="0 0 100 100"><rect width="100" height="100" rx="22.5" fill="#fbfbfb"/>
<circle cx="19" cy="25" r="6" fill="none" stroke="#2f7ff0" stroke-width="2"/><circle cx="19" cy="25" r="3.5" fill="#2f7ff0"/>
<circle cx="19" cy="50" r="6" fill="none" stroke="#e0443a" stroke-width="2"/><circle cx="19" cy="50" r="3.5" fill="#e0443a"/>
<circle cx="19" cy="75" r="6" fill="none" stroke="#f59a3a" stroke-width="2"/><circle cx="19" cy="75" r="3.5" fill="#f59a3a"/>
<path d="M38 25h48M38 50h48M38 75h48" stroke="#c8c8c8" stroke-width="1.5"/></svg>
<svg class="ic" style="left:1284.6px;top:1672px" width="87" height="87" viewBox="0 0 100 100"><clipPath id="nc"><rect width="100" height="100" rx="22.5"/></clipPath>
<g clip-path="url(#nc)"><rect width="100" height="100" fill="#f2f0ea"/><rect width="100" height="26" fill="#f8d04a"/>
<path d="M0 28h100" stroke="#ccc" stroke-width="1" stroke-dasharray="2 2"/><path d="M0 50h100M0 75h100" stroke="#d8d6d0" stroke-width="1.2"/></g></svg>
<svg class="ic" style="left:1401.1999999999998px;top:1672px" width="87" height="87" viewBox="0 0 100 100"><defs><linearGradient id="mug" x1="0" y1="0" x2="0" y2="1"><stop offset="0" stop-color="#f06878"/><stop offset="1" stop-color="#e63c48"/></linearGradient></defs>
<rect width="100" height="100" rx="22.5" fill="url(#mug)"/>
<path d="M38 27l36-7v55h-7V33l-22 4v43h-7z" fill="#fff"/>
<ellipse cx="33" cy="79" rx="11" ry="9" fill="#fff"/><ellipse cx="64" cy="73" rx="11" ry="9" fill="#fff"/></svg>
<svg class="ic" style="left:1517.7999999999997px;top:1672px" width="87" height="87" viewBox="0 0 100 100"><defs><linearGradient id="asg" x1="0" y1="0" x2="0" y2="1"><stop offset="0" stop-color="#45a8ef"/><stop offset="1" stop-color="#2565e0"/></linearGradient></defs>
<rect width="100" height="100" rx="22.5" fill="url(#asg)"/>
<g stroke="#f4f6fa" stroke-width="8" stroke-linecap="round"><path d="M43 20l31 59"/><path d="M57 20L26 79"/><path d="M17 63h66"/></g></svg>
<svg class="ic" style="left:1634.3999999999999px;top:1672px" width="87" height="87" viewBox="0 0 100 100"><defs><linearGradient id="spg" x1="0" y1="0" x2="0" y2="1"><stop offset="0" stop-color="#dcdcdc"/><stop offset="1" stop-color="#9a9a9a"/></linearGradient></defs>
<rect width="100" height="100" rx="22.5" fill="url(#spg)"/>
<circle cx="50" cy="50" r="40" fill="#8a8a8a"/>
<circle cx="50" cy="50" r="36" fill="none" stroke="#3c3c3c" stroke-width="7" stroke-dasharray="1.6 1.6"/>
<circle cx="50" cy="50" r="29" fill="#9c9c9c"/><circle cx="50" cy="50" r="26" fill="#5e5e5e"/>
<circle cx="50" cy="50" r="20" fill="#8a8a8a"/><circle cx="50" cy="50" r="15" fill="#6a6a6a"/>
<path d="M50 50V26M50 50l21 12M50 50L29 62" stroke="#a8a8a8" stroke-width="4"/><circle cx="50" cy="50" r="4" fill="#b0b0b0"/></svg>
<svg class="ic" style="left:1804.0px;top:1672px" width="87" height="87" viewBox="0 0 100 100"><rect x="1" y="10" width="98" height="90" rx="22" fill="#dcc060"/><rect width="100" height="88" rx="22.5" fill="#f8e796"/>
<path d="M18 34c1-12 5-14 6-6s2 12 7 6 6-4 9-1 6 2 10 1 10 1 18 1" fill="none" stroke="#dcc56a" stroke-width="5" stroke-linecap="round"/><path d="M16 50h66M16 64h34" stroke="#dcc56a" stroke-width="6"/></svg>
<svg class="ic" style="left:1920.6px;top:1672px" width="87" height="87" viewBox="0 0 100 100"><defs><linearGradient id="wg" x1="0" y1="0" x2="0" y2="1"><stop offset="0" stop-color="#6ee86a"/><stop offset="1" stop-color="#3cc248"/></linearGradient></defs>
<rect width="100" height="100" rx="22.5" fill="url(#wg)"/>
<circle cx="51" cy="48" r="33" fill="none" stroke="#f2fbf2" stroke-width="8"/><path d="M15 88l10-23 16 12z" fill="#f2fbf2"/>
<path d="M38 33c-3 3-4 9 2 17s13 13 18 13c4 0 7-3 7-5l-7-5-4 3c-5-2-9-7-11-11l3-4-4-8c-2 0-3 0-4 0z" fill="#f2fbf2"/></svg>
<svg class="ic" style="left:2037.2px;top:1672px" width="87" height="87" viewBox="0 0 100 100"><rect width="100" height="100" rx="22.5" fill="#f6f6f6"/>
<path d="M50 50L15.36 30A40 40 0 0 1 84.64 30z" fill="#d6503f"/>
<path d="M50 50L84.64 30A40 40 0 0 1 50 90z" fill="#f5c44c"/>
<path d="M50 50L50 90A40 40 0 0 1 15.36 30z" fill="#3e9a5b"/>
<circle cx="50" cy="50" r="18" fill="#fff"/><circle cx="50" cy="50" r="14" fill="#4f86e8"/></svg>
<svg class="ic" style="left:2153.8px;top:1672px" width="87" height="87" viewBox="0 0 100 100"><circle cx="50" cy="50" r="50" fill="#5ccf6a"/>
<path d="M20 33c18-6 42-5 62 4M22 50c16-5 36-4 52 3M26 66c13-4 28-3 40 2" fill="none" stroke="#141414" stroke-width="8" stroke-linecap="round"/></svg>
<svg class="ic" style="left:2270.4px;top:1672px" width="87" height="87" viewBox="0 0 100 100"><rect width="100" height="100" rx="22.5" fill="#f2f2f2"/>
<clipPath id="pvc"><rect x="8" y="8" width="84" height="84" rx="14"/></clipPath>
<g clip-path="url(#pvc)"><rect x="8" y="8" width="84" height="84" fill="#a4bde9"/>
<rect x="8" y="54" width="84" height="10" fill="#2e4a8e"/><rect x="8" y="64" width="84" height="28" fill="#e8f0f6"/>
<path d="M8 70c6-3 14-2 22 1 4 1 2 3-4 3H8z" fill="#4a4a50"/><path d="M20 92c4-6 12-8 24-6 6 1 8 4 6 6z" fill="#8a7a66"/></g>
<path d="M56 70h34l8 28c-6 4-40 4-48 0z" fill="#e6e8ea" stroke="#9a9ea2" stroke-width="1.5"/>
<ellipse cx="73" cy="90" rx="18" ry="4" fill="#fafafa"/>
<path d="M63 84c3-4 7-3 9 0M76 77c3-3 7-2 8 1" stroke="#888" stroke-width="3" fill="none"/>
<path d="M55 56c0-4 8-6 18-6s18 2 18 6v13c0 2-8 4-18 4s-18-2-18-4z" fill="#1c1c1e"/>
<ellipse cx="73" cy="56" rx="18" ry="4" fill="#3a3a3c"/></svg>
<svg class="ic" style="left:2387.0px;top:1672px" width="87" height="87" viewBox="0 0 100 100"><rect width="100" height="100" rx="22.5" fill="#d8d8d8"/>
<rect x="22" y="12" width="56" height="76" rx="8" fill="#2c2c2c"/><rect x="28" y="19" width="44" height="16" rx="3" fill="#555"/><circle cx="35" cy="46" r="5.5" fill="#d0d0d0"/><circle cx="50" cy="46" r="5.5" fill="#d0d0d0"/><circle cx="65" cy="46" r="5.5" fill="#f59a2a"/><circle cx="35" cy="61" r="5.5" fill="#d0d0d0"/><circle cx="50" cy="61" r="5.5" fill="#d0d0d0"/><circle cx="65" cy="61" r="5.5" fill="#f59a2a"/><rect x="29" y="71" width="22" height="10" rx="5" fill="#d0d0d0"/><circle cx="65" cy="76" r="5.5" fill="#f59a2a"/></svg>
<svg class="ic" style="left:2554px;top:1674px" width="91" height="92" viewBox="0 0 100 100"><rect x="0" y="0" width="100" height="100" fill="#fff" stroke="#ccc" stroke-width="1"/>
<path d="M8 -6h80v6H8z" fill="#e0e0e0"/>
<text x="-6" y="62" font-family="Liberation Sans" font-weight="700" font-size="46" fill="#e03a3a">ay S</text>
<rect x="0" y="66" width="100" height="6" fill="#e03a3a"/></svg>
<svg class="ic" style="left:2677px;top:1669px" width="77" height="95" viewBox="0 0 100 100"><defs><linearGradient id="tg" x1="0" y1="0" x2="1" y2="0"><stop offset="0" stop-color="#5a5e62"/><stop offset="0.5" stop-color="#7a7e82"/><stop offset="1" stop-color="#505458"/></linearGradient></defs>
<path d="M2 8h96l-10 88a6 6 0 0 1-6 5H18a6 6 0 0 1-6-5z" fill="url(#tg)" opacity="0.9"/><ellipse cx="50" cy="8" rx="48" ry="6" fill="#8a8e92"/></svg>
<div class="a" style="left:1764px;top:1670px;width:2px;height:102px;background:#5a5a5a"></div>
<div class="a" style="left:2516px;top:1670px;width:2px;height:102px;background:#5a5a5a"></div>
<div class="a" style="left:158.0px;top:1778px;width:8px;height:8px;border-radius:50%;background:#8e8e8e"></div>
<div class="a" style="left:391.9px;top:1778px;width:8px;height:8px;border-radius:50%;background:#8e8e8e"></div>
<div class="a" style="left:507.6px;top:1778px;width:8px;height:8px;border-radius:50%;background:#8e8e8e"></div>
<div class="a" style="left:1673.0px;top:1778px;width:8px;height:8px;border-radius:50%;background:#8e8e8e"></div>
<div class="a" style="left:1843.5px;top:1778px;width:8px;height:8px;border-radius:50%;background:#8e8e8e"></div>
<div class="a" style="left:1960.0px;top:1778px;width:8px;height:8px;border-radius:50%;background:#8e8e8e"></div>
<div class="a" style="left:2077.6px;top:1778px;width:8px;height:8px;border-radius:50%;background:#8e8e8e"></div>
<div class="a" style="left:2193.8px;top:1778px;width:8px;height:8px;border-radius:50%;background:#8e8e8e"></div>
<div class="a" style="left:2310.0px;top:1778px;width:8px;height:8px;border-radius:50%;background:#8e8e8e"></div>
<div class="a" style="left:2427.6px;top:1778px;width:8px;height:8px;border-radius:50%;background:#8e8e8e"></div>
<div class="a" style="left:878.8px;top:1664px;width:40px;height:40px;border-radius:50%;background:#e5483d;color:#fff;font-size:25px;line-height:40px;text-align:center">2</div>
<div class="a" style="left:1694px;top:1663px;width:40px;height:40px;border-radius:50%;background:#e5483d;color:#fff;font-size:25px;line-height:40px;text-align:center">1</div>
</body></html>
